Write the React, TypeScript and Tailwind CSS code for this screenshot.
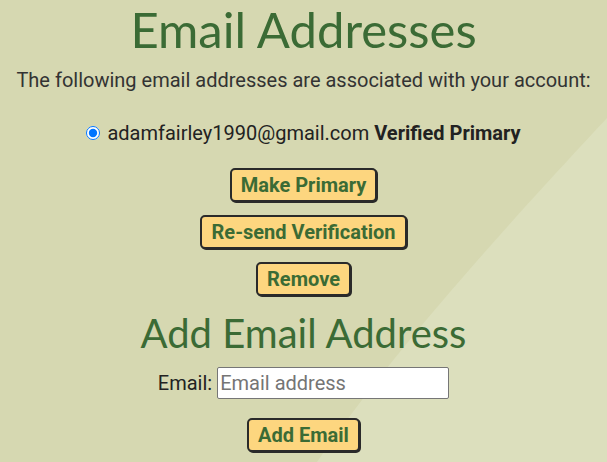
import React from 'react';

const btn =
  'rounded-[5px] border-2 border-[#2a2a2a] bg-[#fdd67f] px-[9px] py-[3px] text-[20px] font-bold leading-[24px] text-[#3b6b35] shadow-[1px_1px_0_#2a2a2a]';

export default function App() {
  return (
    <div className="relative h-[462px] w-[607px] overflow-hidden bg-[#d6d8b1] font-['Roboto',sans-serif]">
      <svg
        className="pointer-events-none absolute inset-0"
        width="607"
        height="462"
        viewBox="0 0 607 462"
      >
        <path d="M607 118 C 540 190, 400 340, 317 462 L 607 462 Z" fill="#dcdfbd" />
      </svg>
      <div className="relative flex flex-col items-center">
        <h1 className="mt-[1px] font-['Lato',sans-serif] text-[49px] leading-[56px] text-[#3b6b35]">
          Email Addresses
        </h1>
        <p className="mt-[11px] text-[20px] leading-[24px] text-[#333]">
          The following email addresses are associated with your account:
        </p>
        <label className="mt-[29px] flex items-center gap-[7px] text-[20px] leading-[24px] text-[#222]">
          <input type="radio" name="email" defaultChecked className="m-0 h-[14px] w-[14px]" />
          <span>
            adamfairley1990@gmail.com <strong className="font-bold">Verified Primary</strong>
          </span>
        </label>
        <div className="mt-[23px] flex flex-col items-center gap-[13px]">
          <button type="button" className={btn}>
            Make Primary
          </button>
          <button type="button" className={`px-[10px] ${btn}`}>
            Re-send Verification
          </button>
          <button type="button" className={btn}>
            Remove
          </button>
        </div>
        <h2 className="mt-[13px] font-['Lato',sans-serif] text-[40px] leading-[48px] text-[#3b6b35]">
          Add Email Address
        </h2>
        <div className="mt-[10px] flex items-center gap-[5px] text-[20px] text-[#222]">
          <span>Email:</span>
          <input
            type="text"
            placeholder="Email address"
            className="h-[32px] w-[232px] rounded-[2px] border border-[#767676] bg-white px-[2px] text-[20px] text-[#222] placeholder:text-[#757575]"
          />
        </div>
        <button type="button" className={`mt-[19px] ${btn}`}>
          Add Email
        </button>
      </div>
    </div>
  );
}
